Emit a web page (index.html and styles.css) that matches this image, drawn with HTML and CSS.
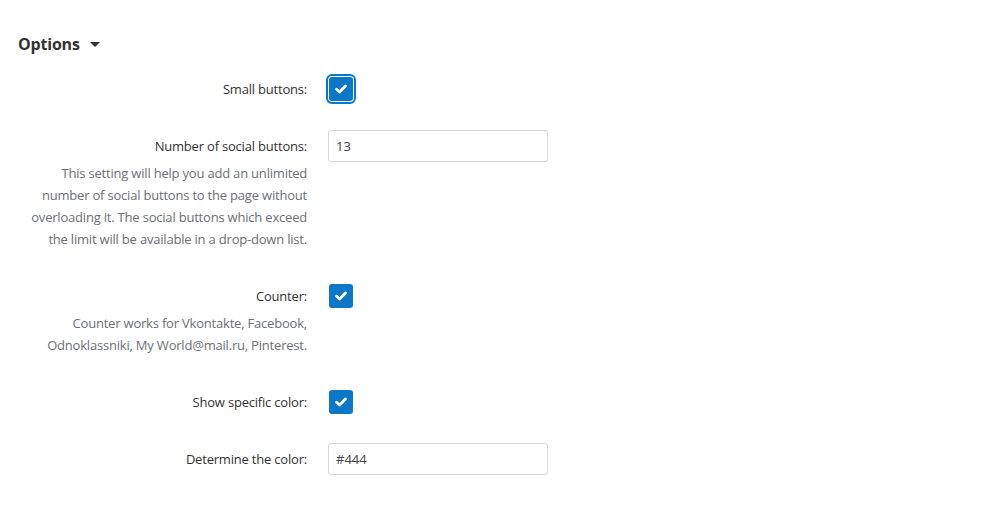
FILE: index.html
```html
<!DOCTYPE html>
<html>
<head>
<meta charset="utf-8">
<link rel="stylesheet" href="styles.css">
</head>
<body>
<div class="page">
  <h2 class="heading">Options <span class="caret"></span></h2>
  <div class="form">
    <div class="row">
      <div class="label-col"><div class="label">Small buttons:</div></div>
      <div class="control"><span class="check focused"><svg viewBox="0 0 12 10" width="12" height="10"><path d="M1.6 5.3 L4.6 8 L10.4 2" fill="none" stroke="#fff" stroke-width="2.8" stroke-linecap="round" stroke-linejoin="round"/></svg></span></div>
    </div>
    <div class="row desc-row">
      <div class="label-col">
        <div class="label">Number of social buttons:</div>
        <div class="desc">This setting will help you add an unlimited number of social buttons to the page without overloading it. The social buttons which exceed the limit will be available in a drop-down list.</div>
      </div>
      <div class="control"><input class="text" type="text" value="13"></div>
    </div>
    <div class="row desc-row">
      <div class="label-col">
        <div class="label">Counter:</div>
        <div class="desc">Counter works for Vkontakte, Facebook, Odnoklassniki, My World@mail.ru, Pinterest.</div>
      </div>
      <div class="control"><span class="check"><svg viewBox="0 0 12 10" width="12" height="10"><path d="M1.6 5.3 L4.6 8 L10.4 2" fill="none" stroke="#fff" stroke-width="2.8" stroke-linecap="round" stroke-linejoin="round"/></svg></span></div>
    </div>
    <div class="row">
      <div class="label-col"><div class="label">Show specific color:</div></div>
      <div class="control"><span class="check"><svg viewBox="0 0 12 10" width="12" height="10"><path d="M1.6 5.3 L4.6 8 L10.4 2" fill="none" stroke="#fff" stroke-width="2.8" stroke-linecap="round" stroke-linejoin="round"/></svg></span></div>
    </div>
    <div class="row">
      <div class="label-col"><div class="label">Determine the color:</div></div>
      <div class="control"><input class="text" type="text" value="#444"></div>
    </div>
  </div>
</div>
</body>
</html>
```
FILE: styles.css
```css
html, body {
  margin: 0;
  padding: 0;
  background: #fff;
}
body {
  font-family: "Open Sans", "Noto Sans", sans-serif;
  color: #333;
  font-size: 13px;
}
.page {
  padding: 32px 0 0 18px;
}
.heading {
  margin: 0 0 17px 0;
  font-size: 16px;
  line-height: 24px;
  font-weight: 700;
  color: #333;
  display: flex;
  align-items: center;
  letter-spacing: -0.2px;
}
.caret {
  display: inline-block;
  width: 0;
  height: 0;
  border-left: 5px solid transparent;
  border-right: 5px solid transparent;
  border-top: 5px solid #333;
  margin-left: 10px;
  margin-top: 1px;
}
.form {
  display: flex;
  flex-direction: column;
  gap: 25px;
}
.row {
  display: grid;
  grid-template-columns: 289px 220px;
  column-gap: 21px;
}
.desc-row {
  padding-bottom: 5px;
}
.label-col {
  text-align: right;
}
.label {
  line-height: 32px;
  height: 32px;
  color: #333;
  letter-spacing: -0.2px;
}
.desc {
  color: #6b7078;
  line-height: 22px;
  letter-spacing: -0.2px;
}
.control {
  height: 32px;
  display: flex;
  align-items: center;
}
.check {
  width: 24px;
  height: 24px;
  margin-left: 1px;
  border-radius: 3px;
  background: #0a77c8;
  display: flex;
  align-items: center;
  justify-content: center;
}
.check.focused {
  box-shadow: 0 0 0 1px #fff, 0 0 0 3px #0a77c8;
}
.text {
  box-sizing: border-box;
  width: 220px;
  height: 32px;
  border: 1px solid #d3d9df;
  border-radius: 3px;
  padding: 0 7px;
  font-family: "Open Sans", "Noto Sans", sans-serif;
  font-size: 13px;
  color: #444;
  background: #fff;
  outline: none;
}
```
